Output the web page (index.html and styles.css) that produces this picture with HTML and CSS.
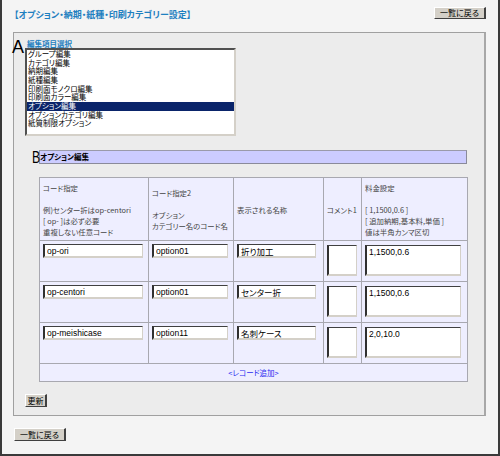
FILE: index.html
```html
<!DOCTYPE html>
<html lang="ja">
<head>
<meta charset="utf-8">
<title>オプション・納期・紙種・印刷カテゴリー設定</title>
<link rel="stylesheet" href="styles.css">
</head>
<body>
<div class="page">
  <div class="top">
    <div class="title">【オプション・納期・紙種・印刷カテゴリー設定】</div>
    <button class="btn btn-back">一覧に戻る</button>
  </div>
  <div class="panel">
    <div class="sec-a">
      <span class="marker marker-a">A</span>
      <div class="sec-label">編集項目選択</div>
      <div class="listbox">
        <div class="opt">グループ編集</div>
        <div class="opt">カテゴリ編集</div>
        <div class="opt">納期編集</div>
        <div class="opt">紙種編集</div>
        <div class="opt">印刷面モノクロ編集</div>
        <div class="opt">印刷面カラー編集</div>
        <div class="opt selected">オプション編集</div>
        <div class="opt">オプションカテゴリ編集</div>
        <div class="opt">紙質制限オプション</div>
      </div>
    </div>
    <div class="sec-b">
      <div class="bar">オプション編集</div>
      <span class="marker marker-b">B</span>
    </div>
    <table class="grid">
      <colgroup>
        <col class="c1"><col class="c2"><col class="c3"><col class="c4"><col class="c5">
      </colgroup>
      <tr class="head">
        <th>コード指定<br><br>例)センター折はop-centori<br>[&nbsp;op-&nbsp;]は必ず必要<br>重複しない任意コード</th>
        <th>コード指定2<br><br>オプション<br>カテゴリー名のコード名</th>
        <th>表示される名称</th>
        <th>コメント1</th>
        <th>料金設定<br><br>[&nbsp;1,1500,0.6&nbsp;]<br>[&nbsp;追加納期,基本料,単価&nbsp;]<br>値は半角カンマ区切</th>
      </tr>
      <tr class="row">
        <td><input class="field in-code" type="text" value="op-ori"></td>
        <td><input class="field in-code2" type="text" value="option01"></td>
        <td><input class="field in-name" type="text" value="折り加工"></td>
        <td><textarea class="field ta-comment"></textarea></td>
        <td><textarea class="field ta-price">1,1500,0.6</textarea></td>
      </tr>
      <tr class="row">
        <td><input class="field in-code" type="text" value="op-centori"></td>
        <td><input class="field in-code2" type="text" value="option01"></td>
        <td><input class="field in-name" type="text" value="センター折"></td>
        <td><textarea class="field ta-comment"></textarea></td>
        <td><textarea class="field ta-price">1,1500,0.6</textarea></td>
      </tr>
      <tr class="row">
        <td><input class="field in-code" type="text" value="op-meishicase"></td>
        <td><input class="field in-code2" type="text" value="option11"></td>
        <td><input class="field in-name" type="text" value="名刺ケース"></td>
        <td><textarea class="field ta-comment"></textarea></td>
        <td><textarea class="field ta-price">2,0,10.0</textarea></td>
      </tr>
      <tr class="foot">
        <td colspan="5"><a class="add-link" href="#">&lt;レコード追加&gt;</a></td>
      </tr>
    </table>
    <button class="btn btn-update">更新</button>
  </div>
  <button class="btn btn-back btn-bottom">一覧に戻る</button>
</div>
</body>
</html>
```
FILE: styles.css
```css
html, body {
  margin: 0;
  padding: 0;
  background: #f4f4f4;
}

.page {
  width: 500px;
  height: 456px;
  box-sizing: border-box;
  border-left: 2px solid #3a3a3a;
  border-right: 2px solid #3a3a3a;
  border-bottom: 2px solid #3a3a3a;
  background: #f4f4f4;
  font-family: "Noto Sans CJK JP", "Liberation Sans", sans-serif;
  font-feature-settings: "palt";
  font-size: 8px;
  color: #000;
}

.top {
  display: flex;
  justify-content: space-between;
  align-items: flex-start;
  height: 25px;
  padding: 7px 12px 0 12px;
}

.title {
  margin-top: 3px;
  line-height: 10px;
  font-size: 9px;
  font-weight: bold;
  color: #1f80c0;
  white-space: nowrap;
}

.btn {
  display: block;
  box-sizing: border-box;
  margin: 0;
  padding: 0;
  font-family: "Noto Sans CJK JP", "Liberation Sans", sans-serif;
  font-feature-settings: "palt";
  font-size: 8px;
  line-height: 10px;
  color: #000;
  background: #d4d0c8;
  border-top: 1px solid #ffffff;
  border-left: 1px solid #ffffff;
  border-right: 2px solid #404040;
  border-bottom: 1px solid #404040;
  text-align: center;
  cursor: default;
}

.btn-back {
  width: 52px;
  height: 12px;
}

.btn-bottom {
  height: 13px;
  margin: 12px 0 0 12px;
}

.btn-update {
  width: 22px;
  height: 13px;
  margin: 12px 0 0 11px;
}

.panel {
  margin-left: 11px;
  width: 473px;
  height: 384px;
  box-sizing: border-box;
  background: #ececec;
  border-top: 1px solid #a0a0a0;
  border-left: 1px solid #a0a0a0;
  border-right: 2px solid #a8a8a8;
  border-bottom: 1px solid #a0a0a0;
}

.sec-a {
  position: relative;
  padding-top: 6px;
}

.marker {
  position: absolute;
  font-family: "Liberation Sans", Arial, sans-serif;
  font-size: 18px;
  line-height: 18px;
  color: #000;
}

.marker-a {
  left: -2px;
  top: 5px;
}

.sec-label {
  margin-left: 13px;
  line-height: 9px;
  font-size: 7.5px;
  font-weight: bold;
  color: #1f80c0;
}

.listbox {
  margin-left: 11px;
  width: 211px;
  height: 88px;
  box-sizing: border-box;
  background: #fff;
  border-top: 2px solid #505050;
  border-left: 2px solid #505050;
  border-right: 2px solid #d4d0c8;
  border-bottom: 2px solid #d4d0c8;
  overflow: hidden;
}

.opt {
  height: 8.67px;
  line-height: 8.67px;
  font-size: 7.5px;
  padding-left: 1px;
  white-space: nowrap;
}

.opt.selected {
  background: #0a246a;
  color: #fff;
}

.sec-b {
  position: relative;
  margin-top: 14px;
}

.marker-b {
  left: 18px;
  top: -1px;
  font-size: 17px;
  transform: scaleX(0.72);
  transform-origin: left center;
}

.bar {
  margin-left: 25px;
  width: 428px;
  height: 14px;
  box-sizing: border-box;
  background: #ccccff;
  border-top: 1px solid #9a9aaa;
  border-left: 1px solid #9a9aaa;
  border-right: 1px solid #8a8a9a;
  border-bottom: 1px solid #8a8a9a;
  line-height: 12px;
  font-size: 7.5px;
  font-weight: bold;
  padding-left: 0;
}

.grid {
  margin: 13px 0 0 25px;
  width: 428px;
  table-layout: fixed;
  border-collapse: collapse;
  background: #eeeeff;
  border: 1px solid #a0a0a8;
}

.c1 { width: 109px; }
.c2 { width: 85px; }
.c3 { width: 90px; }
.c4 { width: 38px; }
.c5 { width: 106px; }

.grid th,
.grid td {
  border: 1px solid #a8a8b0;
  padding: 0 3px;
}

.head {
  height: 63px;
}

.head th {
  font-weight: normal;
  font-size: 7.4px;
  text-align: left;
  vertical-align: middle;
  color: #444;
  line-height: 11px;
  white-space: nowrap;
  overflow: hidden;
  padding-right: 0;
}

.row {
  height: 41px;
}

.row td {
  vertical-align: top;
  padding-top: 3px;
}

.field {
  display: block;
  box-sizing: border-box;
  margin: 0;
  padding: 0 2px;
  font-family: "Liberation Sans", "Noto Sans CJK JP", sans-serif;
  font-feature-settings: "palt";
  font-size: 8.5px;
  line-height: 10px;
  color: #000;
  background: #fff;
  border-top: 1px solid #404040;
  border-left: 2px solid #303030;
  border-right: 1px solid #d4d0c8;
  border-bottom: 2px solid #d4d0c8;
  outline: none;
}

.in-code { width: 100px; height: 14px; }
.in-code2 { width: 76px; height: 14px; }
.in-name { width: 79px; height: 14px; }

textarea.field {
  resize: none;
  overflow: hidden;
  padding-top: 1px;
  margin-top: 1px;
}

.ta-comment { width: 30px; height: 31px; }
.ta-price { width: 96px; height: 31px; }

.foot {
  height: 18px;
}

.foot td {
  text-align: center;
  vertical-align: middle;
  line-height: 10px;
  font-size: 7.5px;
}

.add-link {
  color: #2b2bf0;
  text-decoration: none;
}
```
